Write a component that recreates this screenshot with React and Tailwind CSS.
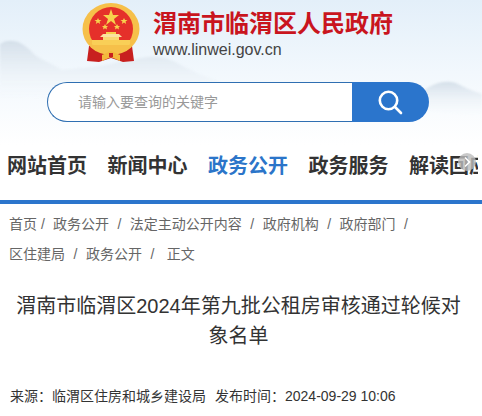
const cjk = "font-['Liberation_Sans','Noto_Sans_CJK_SC',sans-serif]"

const navItems = ['网站首页', '新闻中心', '政务公开', '政务服务', '解读回应']

const Emblem = () => (
  <svg width="58" height="62" viewBox="0 0 58 62" className="shrink-0">
    {/* ribbon */}
    <path d="M7 44 L5 59 L17 60 L29 56 L41 60 L52 59 L50 44 Z" fill="#c8201f" />
    {/* ring */}
    <ellipse cx="29" cy="27" rx="28.500" ry="26" fill="#f6c04a" />
    <circle cx="29" cy="27" r="22" fill="#e5302a" />
    {/* stars */}
    <polygon points="29,7 31,13 37,13 32,17 34,23 29,19 24,23 26,17 21,13 27,13" fill="#f7d24d" />
    <polygon points="16,16 17,18 19.500,18 17.500,19.500 18.200,22 16,20.500 13.800,22 14.500,19.500 12.500,18 15,18" fill="#f7d24d" />
    <polygon points="42,16 43,18 45.500,18 43.500,19.500 44.200,22 42,20.500 39.800,22 40.500,19.500 38.500,18 41,18" fill="#f7d24d" />
    <polygon points="23,22 24,24 26,24 24.500,25.500 25,27.500 23,26.300 21,27.500 21.500,25.500 20,24 22,24" fill="#f7d24d" />
    <polygon points="35,22 36,24 38,24 36.500,25.500 37,27.500 35,26.300 33,27.500 33.500,25.500 32,24 34,24" fill="#f7d24d" />
    {/* gate */}
    <rect x="24" y="30" width="10" height="2" fill="#f7d24d" />
    <path d="M21 32 L37 32 L40 35 L18 35 Z" fill="#fbe3a0" />
    <rect x="21" y="35" width="16" height="3" fill="#f9d973" />
    <rect x="10" y="38" width="38" height="5" fill="#f9cf57" />
    {/* lower band */}
    <path d="M7 40 C10 50 20 52 29 47 C38 52 48 50 51 40 L47 43 L11 43 Z" fill="#f6c04a" />
    <path d="M17 48 L29 45 L41 48 L41 50 L29 49 L17 50 Z" fill="#f6c04a" />
    <path d="M20 53 L29 49 L38 53 L38 59 L29 55 L20 59 Z" fill="#f3b93c" />
    <rect x="27" y="51" width="4" height="4" fill="#c8201f" />
  </svg>
)

const Mountains = () => (
  <svg width="482" height="145" viewBox="0 0 482 145" className="absolute left-0 top-0 blur-[1px]">
    <defs>
      <linearGradient id="hill" x1="0" y1="0" x2="0" y2="1">
        <stop offset="0" stopColor="#d4dfe9" />
        <stop offset="1" stopColor="#f4f8fc" stopOpacity="0" />
      </linearGradient>
    </defs>
    <path d="M0 44 C8 38 20 40 30 50 C38 60 50 62 62 70 C85 68 105 66 118 62 C135 60 150 54 165 58 C178 62 190 72 215 80 L240 92 L0 100 Z" fill="url(#hill)" />
    <path d="M424 90 C436 82 450 78 462 86 C470 90 476 92 482 94 L482 116 L430 112 Z" fill="url(#hill)" />
  </svg>
)

const App = () => {
  return (
    <div className={`w-[482px] h-[416px] overflow-hidden bg-white ${cjk}`}>
      {/* HEADER */}
      <div className="relative h-[145px] bg-gradient-to-b from-[#e3eff9] via-[#f2f8fd] to-white">
        <Mountains />
        <div className="relative flex items-start pt-[2px] pl-[82px] gap-[13px]">
          <Emblem />
          <div className="pt-[5px]">
            <div className="text-[24px] leading-[34px] font-bold text-[#c9151e] whitespace-nowrap">渭南市临渭区人民政府</div>
            <div className="text-[16px] leading-[18px] text-[#444] whitespace-nowrap">www.linwei.gov.cn</div>
          </div>
        </div>

        {/* SEARCH */}
        <div className="relative mt-[18px] ml-[47px] w-[382px] h-[40px] flex">
          <div className="flex-1 flex items-center pl-[30px] bg-white border border-[#2f6fb2] border-r-0 rounded-l-[20px] text-[14px] text-[#999]">
            请输入要查询的关键字
          </div>
          <div className="w-[77px] flex items-center justify-center pr-[2px] bg-[#2b75cc] rounded-r-[20px]">
            <svg width="26" height="26" viewBox="0 0 26 26" fill="none" stroke="#fff" strokeWidth="2.6" strokeLinecap="round">
              <circle cx="11.500" cy="11.500" r="8.700" />
              <line x1="18" y1="18" x2="24" y2="24" />
            </svg>
          </div>
        </div>
      </div>

      {/* NAV */}
      <div className="relative h-[55px] border-b-4 border-[#2b75cc] box-content">
        <div className="flex gap-[20.500px] pl-[7px] pt-[7px] overflow-hidden w-[478px]">
          {navItems.map((item) => (
            <span
              key={item}
              className={`text-[20px] leading-[28px] font-bold whitespace-nowrap ${item === '政务公开' ? 'text-[#2b75c9]' : 'text-[#333]'}`}
            >
              {item}
            </span>
          ))}
        </div>
        <div className="absolute right-[6px] top-[8px] w-[18px] h-[18px] rounded-full bg-[#bbb]/80 flex items-center justify-center">
          <svg width="14" height="14" viewBox="0 0 14 14" fill="none" stroke="#fff" strokeWidth="1.500">
            <path d="M5 2.500 L9.500 7 L5 11.500" />
          </svg>
        </div>
      </div>

      {/* BREADCRUMB */}
      <div className="pl-[9px] pt-[5px] text-[14px] leading-[30px] text-[#666]">
        <div className="flex whitespace-nowrap">
          <span>首页</span>
          <span className="ml-[4px] mr-[8px]">/</span>
          <span>政务公开</span>
          <span className="mx-[8.500px]">/</span>
          <span>法定主动公开内容</span>
          <span className="mx-[8.500px]">/</span>
          <span>政府机构</span>
          <span className="mx-[8.500px]">/</span>
          <span>政府部门</span>
          <span className="mx-[8.500px]">/</span>
        </div>
        <div className="flex whitespace-nowrap">
          <span>区住建局</span>
          <span className="mx-[8.500px]">/</span>
          <span>政务公开</span>
          <span className="mx-[8.500px]">/</span>
          <span className="ml-[4px]">正文</span>
        </div>
      </div>

      {/* TITLE */}
      <h1 className="mt-[22px] pl-[10px] pr-[15px] text-center text-[20px] leading-[30px] font-normal text-[#333]">
        渭南市临渭区2024年第九批公租房审核通过轮候对象名单
      </h1>

      {/* META */}
      <div className="mt-[35px] pl-[10px] flex gap-[9px] text-[14px] leading-[20px] text-[#333] whitespace-nowrap">
        <span>{'来源\uFF1A'}临渭区住房和城乡建设局</span>
        <span>{'发布时间\uFF1A'}2024-09-29 10:06</span>
      </div>
    </div>
  )
}

export default App
